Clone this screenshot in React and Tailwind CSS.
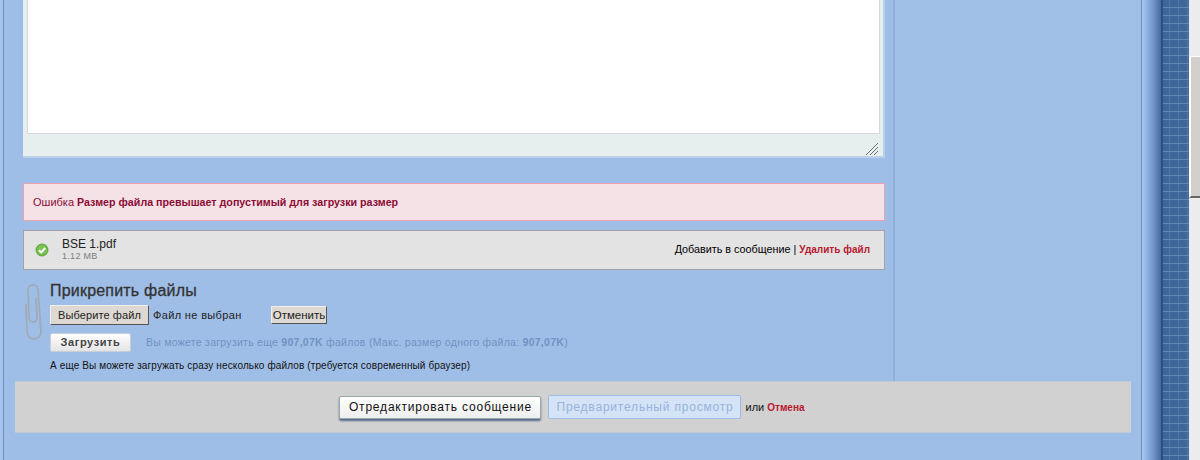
import React from 'react';

const Paperclip = () => (
  <svg className="w-[21px] h-[60px] shrink-0" viewBox="3 2 21 60" fill="none" stroke="#a0abb8" strokeWidth="1.800">
    <path d="M6 24l1 28a7 7 0 0 0 14 0L18 10a5 5 0 0 0-10 0l1 28a4 4 0 0 0 8 0L16 18" />
  </svg>
);

const OkIcon = () => (
  <svg className="w-[14px] h-[14px] shrink-0" viewBox="0 0 14 14">
    <circle cx="7" cy="7" r="6.500" fill="#66b044" />
    <circle cx="7" cy="7" r="5" fill="#7cc258" />
    <path d="M4 7.200l2.200 2.200L10.200 5" fill="none" stroke="#fff" strokeWidth="2" />
  </svg>
);

const ResizeGrip = () => (
  <svg className="absolute right-[5px] bottom-[1px] w-[12px] h-[12px]" viewBox="0 0 12 12" stroke="#6b7278" strokeWidth="1">
    <path d="M0 12L12 0M4 12l8-8M8 12l4-4" />
  </svg>
);

export default function App() {
  return (
    <div className="flex w-[1200px] h-[460px] overflow-hidden bg-[#9fbee7] font-['Liberation_Sans',Arial,sans-serif] text-black">
      {/* left page edge */}
      <div className="w-[4px] shrink-0 flex">
        <div className="w-[3px] bg-[#a5c3ea]"></div>
        <div className="w-[1px] bg-[#6d8fc0]"></div>
      </div>

      {/* main column */}
      <div className="w-[1137px] shrink-0 flex flex-col">
        <div className="h-[381px] flex">
          {/* form */}
          <div className="w-[889px] pl-[19px] shrink-0">
            {/* textarea */}
            <div className="relative w-[862px] h-[158px] bg-[#e7eeee] border-b-2 border-r-2 border-[#b9cfea] pl-[4px] pr-[3px]">
              <div className="h-[134px] bg-white border-l border-b border-r border-[#d5d9dc]"></div>
              <ResizeGrip />
            </div>

            {/* error */}
            <div className="mt-[25px] w-[862px] h-[38px] flex items-center bg-[#f5e2e6] border border-[#ee9fb0] pl-[9px] text-[#8c0c35]">
              <span className="text-[11px]">Ошибка&nbsp;</span>
              <b className="text-[10.700px]">Размер файла превышает допустимый для загрузки размер</b>
            </div>

            {/* uploaded file */}
            <div className="mt-[9px] w-[862px] h-[40px] flex items-center bg-[#e3e3e4] border border-[#a3a3a3] pl-[11px] pr-[14px]">
              <div className="-mt-[1px]"><OkIcon /></div>
              <div className="ml-[13px] flex flex-col -mt-[2px]">
                <span className="text-[12px] leading-[14px] text-[#222]">BSE 1.pdf</span>
                <span className="text-[9px] leading-[11px] text-[#7d7d85] tracking-[0.3px]">1.12 MB</span>
              </div>
              <div className="ml-auto -mt-[2px] text-[10.800px]">
                Добавить в сообщение | <b className="text-[10px] text-[#b8192f]">Удалить файл</b>
              </div>
            </div>

            {/* attach */}
            <div className="mt-[12px] flex">
              <Paperclip />
              <div className="ml-[6px] flex flex-col items-start">
                <h3 className="text-[16px] leading-[18px] font-normal text-[#333] [-webkit-text-stroke:0.3px_#333] tracking-[0.2px]">Прикрепить файлы</h3>
                <div className="mt-[5px] flex items-center h-[20px]">
                  <button className="w-[99px] h-[20px] bg-[#ddd8d2] border border-t-[#f3f0ec] border-l-[#f3f0ec] border-r-[#555] border-b-[#555] text-[11px] tracking-[0.1px] text-[#222]">Выберите файл</button>
                  <span className="ml-[4px] w-[118px] text-[11px] tracking-[0.35px] text-[#222]">Файл не выбран</span>
                  <button className="w-[56px] h-[18px] bg-[#ddd8d2] border border-t-[#f3f0ec] border-l-[#f3f0ec] border-r-[#555] border-b-[#555] text-[11.500px] text-[#222]">Отменить</button>
                </div>
                <div className="mt-[8px] flex items-center h-[19px]">
                  <button className="w-[81px] h-[19px] rounded-[2px] bg-gradient-to-b from-white to-[#e4e4e4] border border-[#c8cfd8] text-[11px] font-bold tracking-[0.6px] text-[#444]">Загрузить</button>
                  <span className="ml-[15px] text-[10.500px] tracking-[0.27px] text-[#6f92c4]">
                    Вы можете загрузить еще <b>907,07K</b> файлов (Макс. размер одного файла: <b>907,07K</b>)
                  </span>
                </div>
                <p className="mt-[8px] text-[10px] leading-[12px] tracking-[0.125px] text-[#111]">А еще Вы можете загружать сразу несколько файлов (требуется современный браузер)</p>
              </div>
            </div>
          </div>

          {/* sidebar */}
          <div className="w-[2px] bg-[#8fb0dd] shrink-0"></div>
          <div className="flex-1 bg-[#a0bfe7]"></div>
        </div>

        {/* bottom actions */}
        <div className="ml-[11px] w-[1116px] h-[52px] flex items-center justify-center pr-[2px] bg-[#d1d1d1] border-t border-b border-[#c0c8d0]">
          <div className="flex items-center">
            <button className="w-[202px] h-[23px] rounded-[2px] bg-gradient-to-b from-white to-[#eeeeee] border border-[#9aa] shadow-[0_2px_2px_#56698c] text-[12px] tracking-[0.8px] text-[#111]">Отредактировать сообщение</button>
            <button className="ml-[7px] w-[193px] h-[24px] rounded-[2px] bg-[#d5e3f7] border border-[#9dbbe5] text-[12px] tracking-[0.8px] text-[#96b4dc]">Предварительный просмотр</button>
            <span className="ml-[4px] text-[11px] text-[#111]">или <b className="text-[10px] text-[#b8192f]">Отмена</b></span>
          </div>
        </div>
      </div>

      {/* right page edge */}
      <div className="w-[1px] bg-[#6d8fc0] shrink-0"></div>
      <div className="w-[19px] shrink-0 bg-[linear-gradient(to_right,#a9c8f0_0%,#8fb3e4_25%,#7094c6_60%,#48699c_100%)]"></div>
      <div className="w-[28px] shrink-0 bg-[#3f6698] bg-[linear-gradient(to_right,#2a4c80_0,#2a4c80_2px,transparent_2px),repeating-linear-gradient(to_bottom,transparent_0,transparent_7px,#6387b3_7px,#6387b3_8px),repeating-linear-gradient(to_right,transparent_0,transparent_8px,#5577a6_8px,#5577a6_9px)]"></div>

      {/* browser scrollbar */}
      <div className="w-[12px] shrink-0 flex flex-col bg-[#ececec]">
        <div className="h-[56px]"></div>
        <div className="h-[142px] bg-[#d3cfcb] border-l-2 border-t border-white border-b-2 border-b-[#666]"></div>
      </div>
    </div>
  );
}
